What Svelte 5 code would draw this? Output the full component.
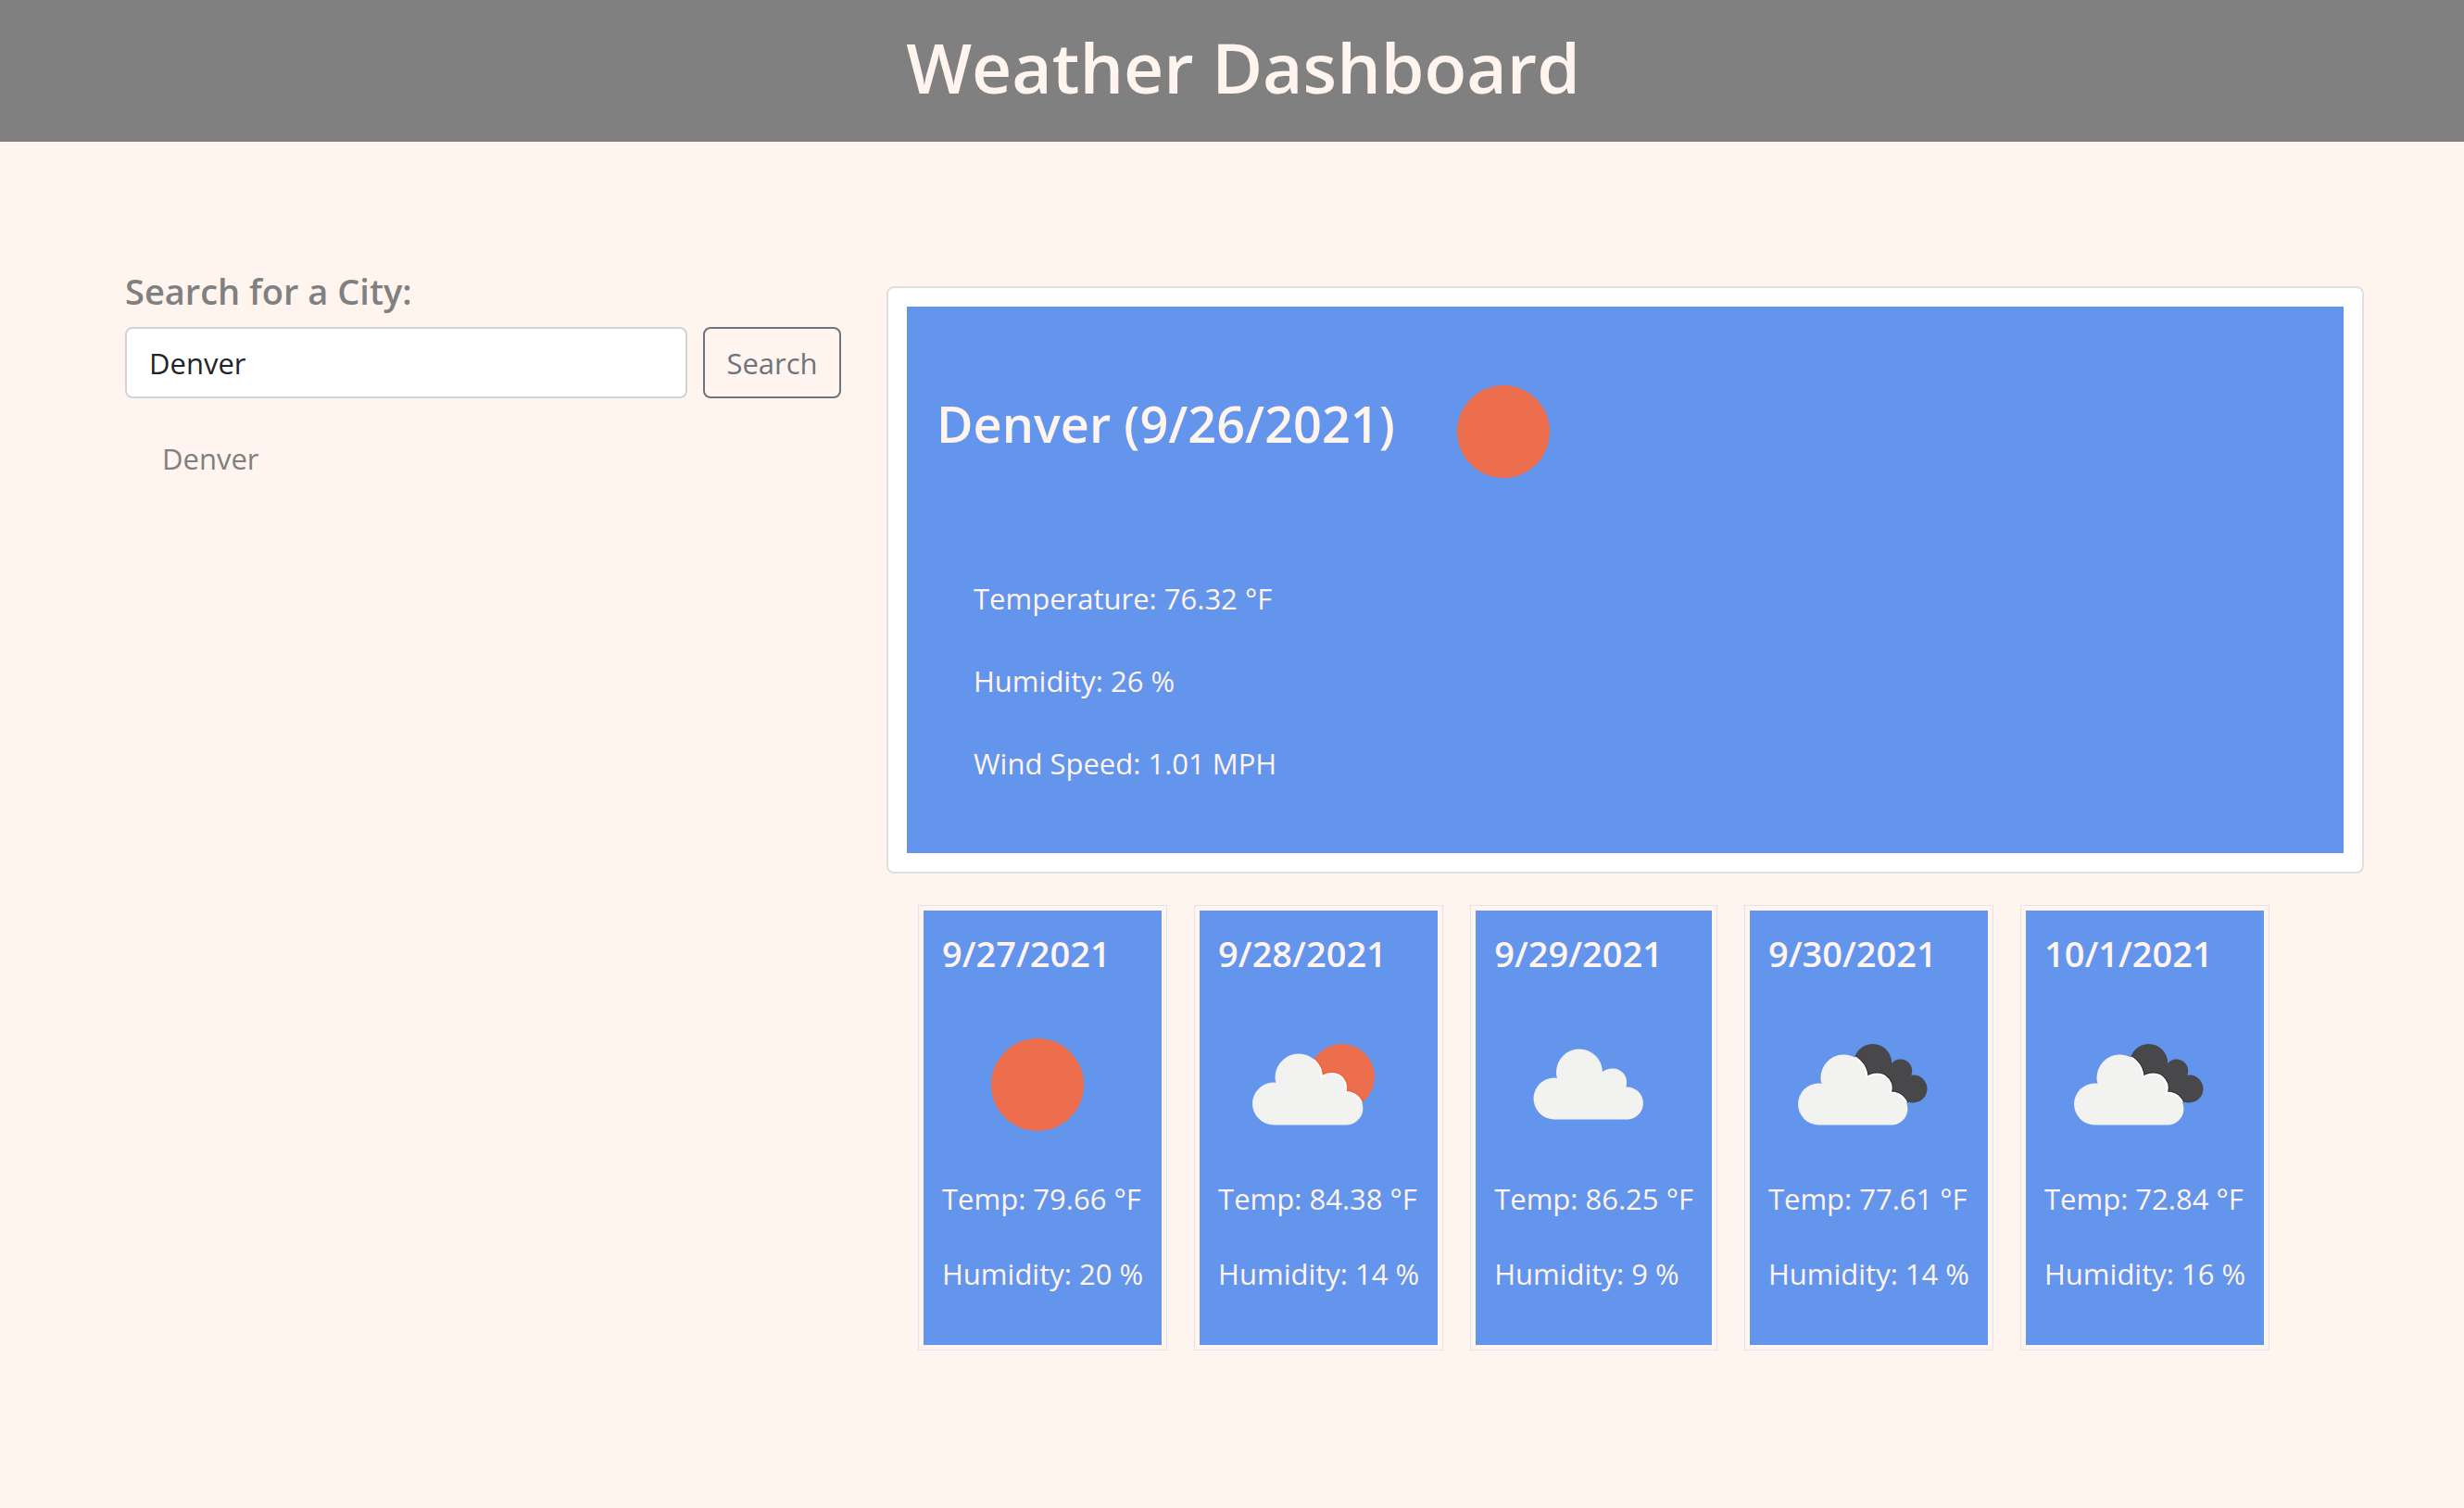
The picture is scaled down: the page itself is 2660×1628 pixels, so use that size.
<script>
  let city = $state('Denver');
  let history = $state(['Denver']);

  const current = [
    'Temperature: 76.32 °F',
    'Humidity: 26 %',
    'Wind Speed: 1.01 MPH'
  ];

  const forecast = [
    { date: '9/27/2021', icon: 'sun', label: 'Clear sky', temp: '79.66', humidity: 20 },
    { date: '9/28/2021', icon: 'partly', label: 'Few clouds', temp: '84.38', humidity: 14 },
    { date: '9/29/2021', icon: 'cloud', label: 'Scattered clouds', temp: '86.25', humidity: 9 },
    { date: '9/30/2021', icon: 'overcast', label: 'Broken clouds', temp: '77.61', humidity: 14 },
    { date: '10/1/2021', icon: 'overcast', label: 'Broken clouds', temp: '72.84', humidity: 16 }
  ];

  // Outline of the light cloud: four lobes on a flat base.
  const cloudPath =
    'M65 140.5 A22.5 22.5 0 0 1 65 95.5 Q66.500 95.500 68 95.800 Q67 93 67 90 A25 25 0 0 1 117 89 Q122 85.500 127.500 85.500 A15 15 0 0 1 142.300 105.500 A17.500 17.500 0 0 1 144.500 140.500 Z';

  function search(event) {
    event.preventDefault();
    const name = city.trim();
    if (name && !history.includes(name)) history.push(name);
  }
</script>

{#snippet weatherIcon(kind, label, id)}
  <svg class="icon" viewBox="0 0 206 206" role="img" aria-label={label}>
    {#if kind === 'sun'}
      <circle cx="103" cy="103" r="50" fill="#ec6e4c" />
    {:else if kind === 'cloud'}
      <path d={cloudPath} fill="#f2f2f0" />
    {:else if kind === 'partly'}
      <defs>
        <clipPath id="back-{id}"><circle cx="133.5" cy="94.5" r="35.5" /></clipPath>
      </defs>
      <circle cx="133.5" cy="94.5" r="35.5" fill="#ec6e4c" />
      <g clip-path="url(#back-{id})">
        <path d={cloudPath} transform="translate(-5 5.5)" fill="none" stroke="#ea5a34" stroke-width="4" />
      </g>
      <path d={cloudPath} transform="translate(-5 5.5)" fill="#f2f2f0" stroke="#f2f2f0" />
      <g clip-path="url(#back-{id})">
        <path d={cloudPath} transform="translate(-5 5.5)" fill="none" stroke="#fafcfc" stroke-width="2" />
      </g>
    {:else}
      <defs>
        <clipPath id="back-{id}">
          <circle cx="112.7" cy="79.5" r="20.5" />
          <circle cx="142.7" cy="88" r="12.5" />
          <circle cx="156.5" cy="107.5" r="15" />
          <path d="M100 100L112 79L133 84L143 88L156 107V122H140Z" />
        </clipPath>
      </defs>
      <g clip-path="url(#back-{id})">
        <rect width="206" height="206" fill="#48484a" />
        <path d={cloudPath} transform="translate(-10.5 6)" fill="none" stroke="#2b2b2d" stroke-width="4" />
      </g>
      <path d={cloudPath} transform="translate(-10.5 6)" fill="#f2f2f0" />
      <g clip-path="url(#back-{id})">
        <path d={cloudPath} transform="translate(-10.5 6)" fill="none" stroke="#fdfdfd" stroke-width="2" />
      </g>
    {/if}
  </svg>
{/snippet}

<header>
  <h1>Weather Dashboard</h1>
</header>

<main>
  <aside>
    <form onsubmit={search}>
      <label for="city">Search for a City:</label>
      <div class="row">
        <input id="city" type="text" bind:value={city} />
        <button type="submit">Search</button>
      </div>
    </form>
    <ul class="history">
      {#each history as name}
        <li>{name}</li>
      {/each}
    </ul>
  </aside>

  <div class="results">
    <section class="today">
      <div class="panel">
        <div class="heading">
          <h2>Denver (9/26/2021)</h2>
          {@render weatherIcon('sun', 'Clear sky', 'today')}
        </div>
        <ul class="stats">
          {#each current as line}
            <li>{line}</li>
          {/each}
        </ul>
      </div>
    </section>

    <section class="forecast">
      {#each forecast as day, i}
        <article>
          <div class="day">
            <h3>{day.date}</h3>
            {@render weatherIcon(day.icon, day.label, i)}
            <p>Temp: {day.temp} °F</p>
            <p>Humidity: {day.humidity} %</p>
          </div>
        </article>
      {/each}
    </section>
  </div>
</main>

<style>
  :global(body) {
    margin: 0;
    background: #fff4ee;
    font-family: 'Open Sans', 'Noto Sans', sans-serif;
    font-size: 31px;
    line-height: 50px;
    color: #fff4ee;
  }

  h1, h2, h3, p, ul {
    margin: 0;
    padding: 0;
    font-weight: 400;
    list-style: none;
  }

  header {
    padding: 24px 0 32px 24px;
    background: #808080;
    text-align: center;
  }

  h1 {
    font-size: 75px;
    line-height: 97px;
    font-weight: 600;
  }

  main {
    display: grid;
    grid-template-columns: 773fr 1595fr;
    gap: 49px;
    padding: 137px 108px 40px 135px;
  }

  label {
    display: block;
    margin-bottom: 15px;
    color: #808080;
    font-size: 38px;
    line-height: 48px;
    font-weight: 600;
  }

  .row {
    display: flex;
    gap: 17px;
  }

  input, button {
    box-sizing: border-box;
    height: 77px;
    border-radius: 8px;
    font: inherit;
  }

  input {
    flex: 1;
    min-width: 0;
    padding: 0 24px;
    border: 2px solid #ced4da;
    background: #fff;
    color: #212529;
  }

  button {
    width: 149px;
    padding: 0;
    border: 2px solid #6c757d;
    background: transparent;
    color: #6c757d;
  }

  .history {
    padding: 40px;
    color: #808080;
  }

  .results {
    padding-top: 19px;
  }

  .today {
    padding: 20px;
    border: 2px solid #dfdfdf;
    border-radius: 8px;
    background: #fff;
  }

  .panel {
    padding: 32px 32px 72px;
    background: #6495ed;
  }

  .heading {
    display: flex;
    align-items: center;
    gap: 14px;
  }

  h2 {
    padding-bottom: 18px;
    font-size: 54px;
    line-height: 68px;
    font-weight: 600;
  }

  .icon {
    display: block;
    flex: none;
    width: 206px;
    height: 206px;
  }

  .stats {
    display: grid;
    gap: 39px;
    padding: 52px 40px 0;
  }

  .forecast {
    display: flex;
    gap: 29px;
    padding: 34px 34px 0;
  }

  article {
    padding: 5px;
    border: 1px solid #e1e3ee;
  }

  .day {
    padding: 22px 20px 57px;
    background: #6495ed;
  }

  h3 {
    margin-bottom: 15px;
    font-size: 38px;
    line-height: 48px;
    font-weight: 600;
  }

  p {
    line-height: 40px;
  }

  p + p {
    margin-top: 41px;
  }
</style>
